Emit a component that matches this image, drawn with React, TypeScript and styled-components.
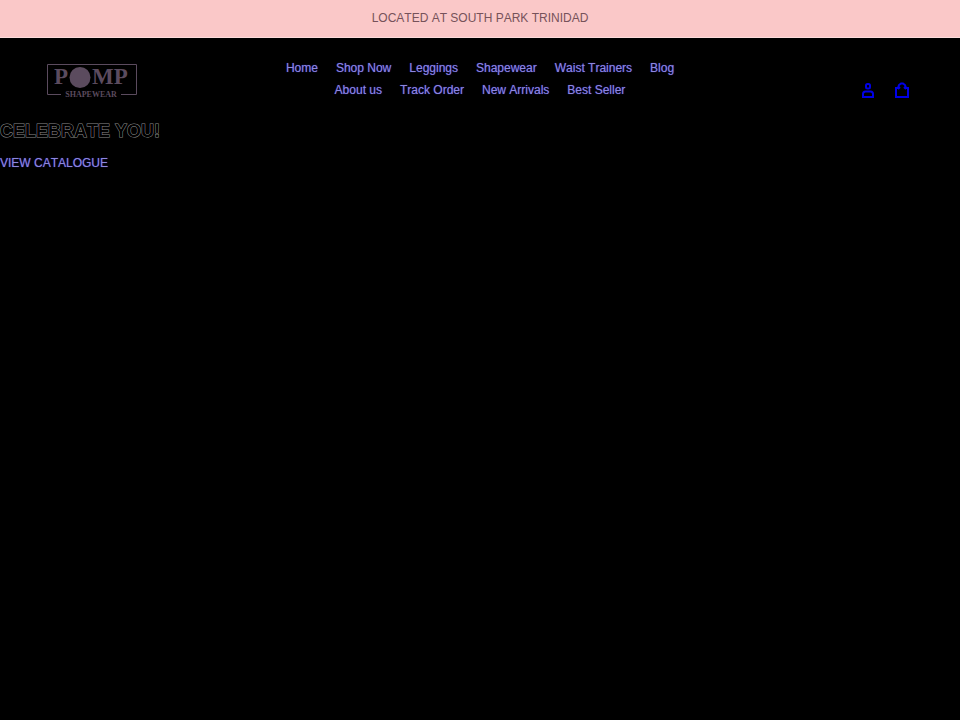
import React from "react";
import styled, { createGlobalStyle } from "styled-components";

const GlobalStyle = createGlobalStyle`
  * { box-sizing: border-box; }
  body {
    margin: 0;
    min-height: 100vh;
    background: #000;
    color: #000;
    font-family: "Liberation Sans", Arial, sans-serif;
    font-size: 12px;
    font-kerning: none;
  }
`;

const Announcement = styled.p`
  margin: 0;
  padding: 8px 16px;
  background: #fac8c8;
  border-bottom: 1px solid #fcdcdc;
  color: #76525a;
  line-height: 21px;
  text-align: center;
`;

const Header = styled.header`
  display: grid;
  grid-template-columns: 1fr 2fr 1fr;
  align-items: start;
  padding: 18px 40px 14px;
`;

const LogoLink = styled.a`
  display: block;
  justify-self: start;
  padding: 6px;
`;

const LogoArt = styled.svg`
  display: block;
  width: 92px;
  height: 38px;
  overflow: visible;
  font-family: "Liberation Serif", serif;
  font-weight: 700;
  fill: #5b4b5e;
`;

const NavList = styled.ul`
  display: flex;
  flex-wrap: wrap;
  justify-content: center;
  column-gap: 18px;
  margin: 0;
  padding: 1px 0 0;
  list-style: none;
`;

const NavLink = styled.a`
  display: block;
  color: #8d87dc;
  line-height: 22px;
  text-decoration: none;
  text-shadow: 0 0 1px #3a30e0;
`;

const Actions = styled.div`
  display: flex;
  justify-content: flex-end;
  gap: 14px;
  padding: 24px 8px 0 0;
`;

const ActionLink = styled.a`
  display: block;
  color: #0000e6;

  svg {
    display: block;
    width: 20px;
    height: 20px;
    fill: none;
    stroke: currentColor;
    stroke-width: 2;
  }
`;

const Title = styled.h1`
  margin: 0;
  color: #000;
  font-size: 18px;
  font-weight: 700;
  line-height: 22px;
  -webkit-text-stroke: 1px #8c8c8c;
  paint-order: stroke fill;
`;

const CatalogueLink = styled(NavLink)`
  display: inline-block;
  margin-top: 10px;
`;

const links = [
  "Home", "Shop Now", "Leggings", "Shapewear", "Waist Trainers",
  "Blog", "About us", "Track Order", "New Arrivals", "Best Seller",
];

export default function App() {
  return (
    <>
      <GlobalStyle />
      <Announcement>LOCATED AT SOUTH PARK TRINIDAD</Announcement>
      <Header>
        <LogoLink href="#" aria-label="Pomp Shapewear">
          <LogoArt viewBox="0 0 92 38" aria-hidden="true">
            <path d="M15 32.5H1.5V2.5H90.5V32.5H75" fill="none" stroke="#5b4b5e" />
            <text x="8" y="22" fontSize="23">P</text>
            <circle cx="34" cy="15.5" r="10.5" />
            <text x="46" y="22" fontSize="23">MP</text>
            <text x="45" y="35" fontSize="8" textAnchor="middle">SHAPEWEAR</text>
          </LogoArt>
        </LogoLink>
        <nav aria-label="Main">
          <NavList>
            {links.map((label) => (
              <li key={label}><NavLink href="#">{label}</NavLink></li>
            ))}
          </NavList>
        </nav>
        <Actions>
          <ActionLink href="#" aria-label="Log in">
            <svg viewBox="0 0 20 20">
              <rect x="8" y="4" width="4" height="4.5" rx="1.5" />
              <path d="M5 17V14Q5 11.5 7.5 11.5H12.5Q15 11.5 15 14V17Z" />
            </svg>
          </ActionLink>
          <ActionLink href="#" aria-label="Cart">
            <svg viewBox="0 0 20 20">
              <path d="M4 17V8H6L7 5L9 3.5H11L13 5L14 8H16V17Z" />
              <path d="M6 9L8 7M12 7L14 9" />
            </svg>
          </ActionLink>
        </Actions>
      </Header>
      <main>
        <Title>CELEBRATE YOU!</Title>
        <CatalogueLink href="#">VIEW CATALOGUE</CatalogueLink>
      </main>
    </>
  );
}
